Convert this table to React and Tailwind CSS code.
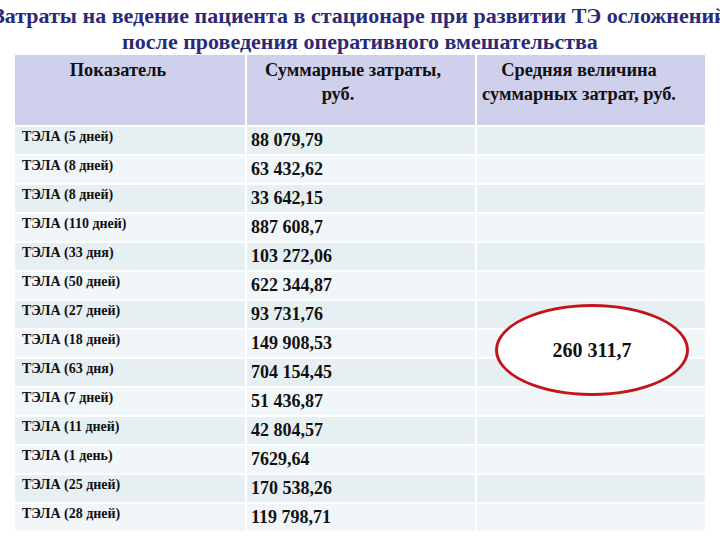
import React from "react";

const rows = [
  ["ТЭЛА (5 дней)", "88 079,79"],
  ["ТЭЛА (8 дней)", "63 432,62"],
  ["ТЭЛА (8 дней)", "33 642,15"],
  ["ТЭЛА (110 дней)", "887 608,7"],
  ["ТЭЛА (33 дня)", "103 272,06"],
  ["ТЭЛА (50 дней)", "622 344,87"],
  ["ТЭЛА (27 дней)", "93 731,76"],
  ["ТЭЛА (18 дней)", "149 908,53"],
  ["ТЭЛА (63 дня)", "704 154,45"],
  ["ТЭЛА (7 дней)", "51 436,87"],
  ["ТЭЛА (11 дней)", "42 804,57"],
  ["ТЭЛА (1 день)", "7629,64"],
  ["ТЭЛА (25 дней)", "170 538,26"],
  ["ТЭЛА (28 дней)", "119 798,71"],
];

export default function App() {
  return (
    <div className="relative w-[720px] h-[540px] overflow-hidden bg-white [font-family:'Liberation_Serif','Times_New_Roman',serif]">
      {/* title */}
      <div className="flex flex-col items-center pt-[3px] text-[22px] leading-[26px] font-bold text-[#2b2a78] whitespace-nowrap">
        <div>Затраты на ведение пациента в стационаре при развитии ТЭ осложнений</div>
        <div>после проведения оперативного вмешательства</div>
      </div>

      {/* table */}
      <div className="ml-[15px] w-[690px]">
        <div className="grid grid-cols-3 h-[70px] bg-[#cfd0ec] text-[#111] font-bold text-[18.4px] leading-[24px]">
          <div className="pt-[3px] pr-[24px] text-center">Показатель</div>
          <div className="pt-[3px] text-center border-l-2 border-white">
            <div className="pr-[16px]">Суммарные затраты,</div>
            <div className="pr-[46px]">руб.</div>
          </div>
          <div className="pt-[3px] pr-[24px] text-center border-l-2 border-white">
            Средняя величина<br />суммарных затрат, руб.
          </div>
        </div>
        {rows.map(([label, value], i) => (
          <div
            key={i}
            className={`grid grid-cols-3 h-[29px] border-t-2 border-white ${
              i % 2 === 0 ? "bg-[#e6f0f3]" : "bg-[#f1f6f8]"
            }`}
          >
            <div className="pl-[7px] pt-[1px] text-[14px] leading-[18px] font-bold text-[#111]">{label}</div>
            <div className="pl-[4px] pt-[2px] text-[18px] leading-[22px] font-bold text-[#111] border-l-2 border-white">
              {value}
            </div>
            <div className="border-l-2 border-white" />
          </div>
        ))}
      </div>

      {/* highlighted average */}
      <div className="absolute left-[495px] top-[304px] w-[194px] h-[92px] rounded-[50%] border-[3px] border-[#c0151b] bg-white flex items-center justify-center">
        <span className="text-[20px] font-bold text-[#111]">260 311,7</span>
      </div>
    </div>
  );
}
